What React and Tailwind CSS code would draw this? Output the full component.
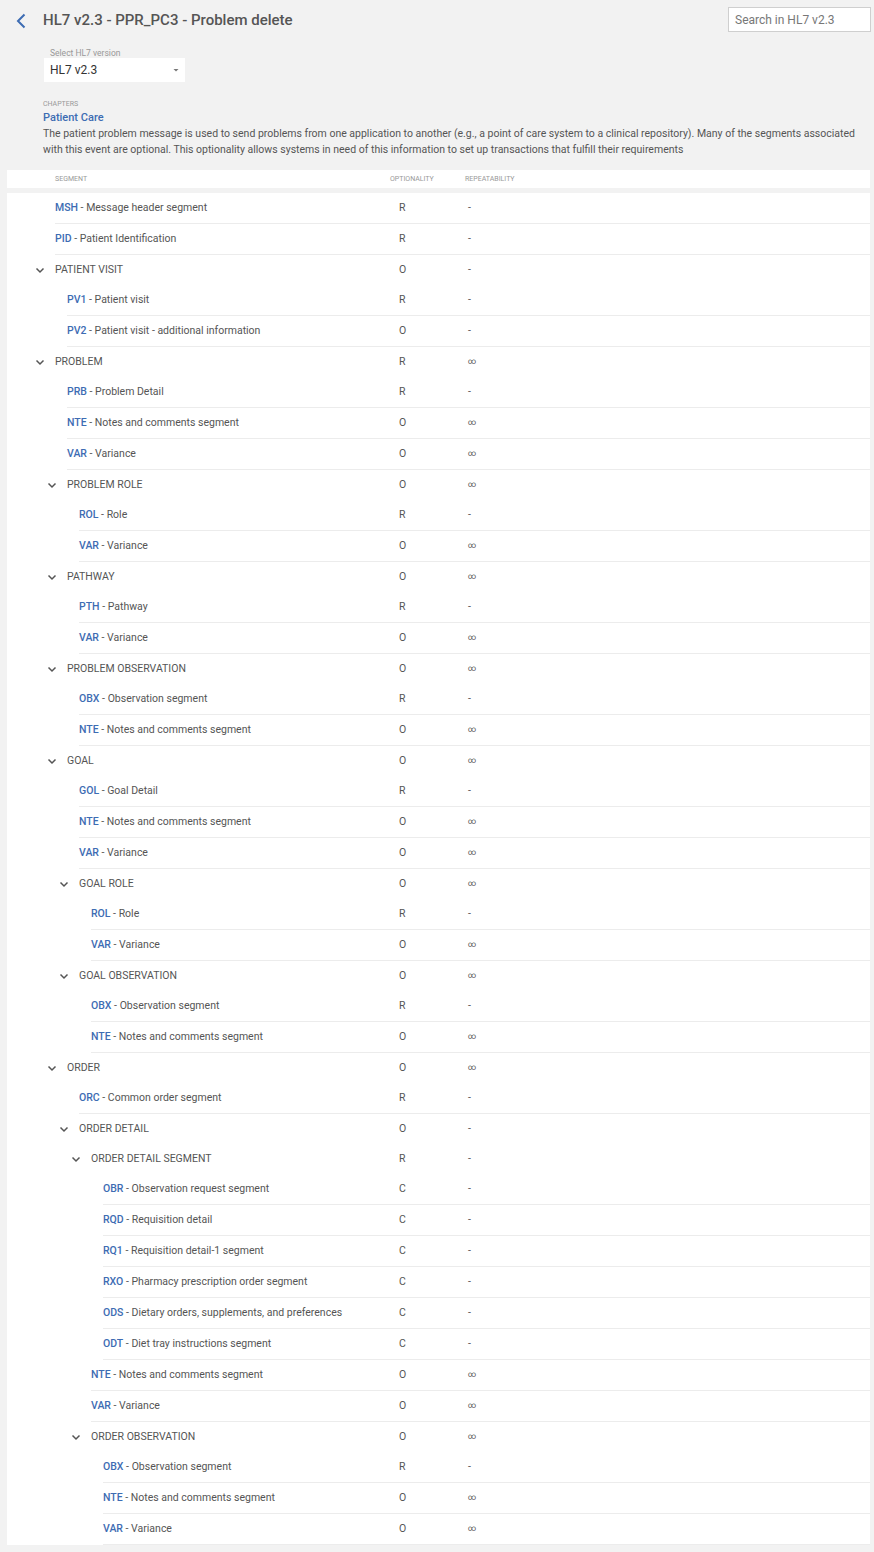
import React from "react";

const rows = [
  { l: 0, c: "MSH", d: "Message header segment", o: "R", r: "-" },
  { l: 0, c: "PID", d: "Patient Identification", o: "R", r: "-" },
  { l: 0, g: "PATIENT VISIT", o: "O", r: "-" },
  { l: 1, c: "PV1", d: "Patient visit", o: "R", r: "-" },
  { l: 1, c: "PV2", d: "Patient visit - additional information", o: "O", r: "-" },
  { l: 0, g: "PROBLEM", o: "R", r: "∞" },
  { l: 1, c: "PRB", d: "Problem Detail", o: "R", r: "-" },
  { l: 1, c: "NTE", d: "Notes and comments segment", o: "O", r: "∞" },
  { l: 1, c: "VAR", d: "Variance", o: "O", r: "∞" },
  { l: 1, g: "PROBLEM ROLE", o: "O", r: "∞" },
  { l: 2, c: "ROL", d: "Role", o: "R", r: "-" },
  { l: 2, c: "VAR", d: "Variance", o: "O", r: "∞" },
  { l: 1, g: "PATHWAY", o: "O", r: "∞" },
  { l: 2, c: "PTH", d: "Pathway", o: "R", r: "-" },
  { l: 2, c: "VAR", d: "Variance", o: "O", r: "∞" },
  { l: 1, g: "PROBLEM OBSERVATION", o: "O", r: "∞" },
  { l: 2, c: "OBX", d: "Observation segment", o: "R", r: "-" },
  { l: 2, c: "NTE", d: "Notes and comments segment", o: "O", r: "∞" },
  { l: 1, g: "GOAL", o: "O", r: "∞" },
  { l: 2, c: "GOL", d: "Goal Detail", o: "R", r: "-" },
  { l: 2, c: "NTE", d: "Notes and comments segment", o: "O", r: "∞" },
  { l: 2, c: "VAR", d: "Variance", o: "O", r: "∞" },
  { l: 2, g: "GOAL ROLE", o: "O", r: "∞" },
  { l: 3, c: "ROL", d: "Role", o: "R", r: "-" },
  { l: 3, c: "VAR", d: "Variance", o: "O", r: "∞" },
  { l: 2, g: "GOAL OBSERVATION", o: "O", r: "∞" },
  { l: 3, c: "OBX", d: "Observation segment", o: "R", r: "-" },
  { l: 3, c: "NTE", d: "Notes and comments segment", o: "O", r: "∞" },
  { l: 1, g: "ORDER", o: "O", r: "∞" },
  { l: 2, c: "ORC", d: "Common order segment", o: "R", r: "-" },
  { l: 2, g: "ORDER DETAIL", o: "O", r: "-" },
  { l: 3, g: "ORDER DETAIL SEGMENT", o: "R", r: "-" },
  { l: 4, c: "OBR", d: "Observation request segment", o: "C", r: "-" },
  { l: 4, c: "RQD", d: "Requisition detail", o: "C", r: "-" },
  { l: 4, c: "RQ1", d: "Requisition detail-1 segment", o: "C", r: "-" },
  { l: 4, c: "RXO", d: "Pharmacy prescription order segment", o: "C", r: "-" },
  { l: 4, c: "ODS", d: "Dietary orders, supplements, and preferences", o: "C", r: "-" },
  { l: 4, c: "ODT", d: "Diet tray instructions segment", o: "C", r: "-" },
  { l: 3, c: "NTE", d: "Notes and comments segment", o: "O", r: "∞" },
  { l: 3, c: "VAR", d: "Variance", o: "O", r: "∞" },
  { l: 3, g: "ORDER OBSERVATION", o: "O", r: "∞" },
  { l: 4, c: "OBX", d: "Observation segment", o: "R", r: "-" },
  { l: 4, c: "NTE", d: "Notes and comments segment", o: "O", r: "∞" },
  { l: 4, c: "VAR", d: "Variance", o: "O", r: "∞" },
];

const indent = ["pl-[48px]", "pl-[60px]", "pl-[72px]", "pl-[84px]", "pl-[96px]"];

function Chevron() {
  return (
    <svg
      className="absolute left-[-20px] top-[10px]"
      width="10"
      height="10"
      viewBox="0 0 10 10"
      fill="none"
    >
      <path d="M1.5 3.5 L5 7 L8.5 3.5" stroke="#555" strokeWidth="1.5" />
    </svg>
  );
}

function Row({ row }) {
  return (
    <div className={`flex ${indent[row.l]}`}>
      <div
        className={`relative flex flex-1 items-center h-[30px] box-content ${
          row.g ? "" : "border-b border-[#ececec]"
        }`}
      >
        {row.g && <Chevron />}
        <div className="flex-1 text-[10.5px] text-[#555] whitespace-nowrap">
          {row.g ? (
            row.g
          ) : (
            <>
              <span className="font-medium text-[#3d6cb3]">{row.c}</span>
              <span> - {row.d}</span>
            </>
          )}
        </div>
        <div className="w-[69px] text-[10.5px] text-[#555]">{row.o}</div>
        <div className={`w-[402px] text-[#555] ${row.r === "∞" ? "text-[8px]" : "text-[10.5px]"}`}>
          {row.r}
        </div>
      </div>
    </div>
  );
}

export default function App() {
  return (
    <div
      className="min-h-[1552px] bg-[#f2f2f2] text-[#555]"
      style={{ fontFamily: "Roboto, 'Liberation Sans', sans-serif" }}
    >
      <div className="flex justify-between pt-[7px] pr-[3px]">
        <div className="flex items-center h-[27px] pl-[15px]">
          <svg width="12" height="16" viewBox="0 0 12 16" fill="none">
            <path d="M9.5 1.5 L3 8 L9.5 14.5" stroke="#3d6cb3" strokeWidth="2" />
          </svg>
          <h1 className="ml-[16px] text-[15px] font-medium text-[#555] leading-none">
            HL7 v2.3 - PPR_PC3 - Problem delete
          </h1>
        </div>
        <div className="w-[143px] h-[25px] border border-[#cfcfcf] bg-white flex items-center pl-[6px] text-[12px] text-[#777]">
          Search in HL7 v2.3
        </div>
      </div>

      <div className="pl-[44px] pt-[14px]">
        <div className="pl-[6px] text-[8.5px] text-[#999] leading-[10px]">Select HL7 version</div>
        <div className="w-[141px] h-[24px] bg-white flex items-center justify-between pl-[6px] pr-[5px]">
          <span className="text-[12px] text-[#333]">HL7 v2.3</span>
          <svg width="8" height="6" viewBox="0 0 8 6">
            <path d="M1.5 2 L6.5 2 L4 4.5 Z" fill="#777" />
          </svg>
        </div>
      </div>

      <div className="pl-[43px] pr-[10px] pt-[18px]">
        <div className="text-[7px] text-[#999] leading-[8px]">CHAPTERS</div>
        <div className="mt-[3px] text-[11px] font-medium text-[#3d6cb3] leading-[14px]">Patient Care</div>
        <p className="mt-[1px] text-[10.5px] leading-[16px] text-[#555]">
          The patient problem message is used to send problems from one application to another (e.g., a point of care system to a clinical repository). Many of the segments associated with this event are optional. This optionality allows systems in need of this information to set up transactions that fulfill their requirements
        </p>
      </div>

      <div className="ml-[7px] mr-[4px] mt-[12px]">
        <div className="flex items-center h-[18px] bg-white pl-[48px] text-[7px] text-[#999]">
          <div className="flex-1">SEGMENT</div>
          <div className="w-[75px]">OPTIONALITY</div>
          <div className="w-[405px]">REPEATABILITY</div>
        </div>
        <div className="mt-[5px] bg-white">
          {rows.map((row, i) => (
            <Row key={i} row={row} />
          ))}
        </div>
      </div>
    </div>
  );
}
